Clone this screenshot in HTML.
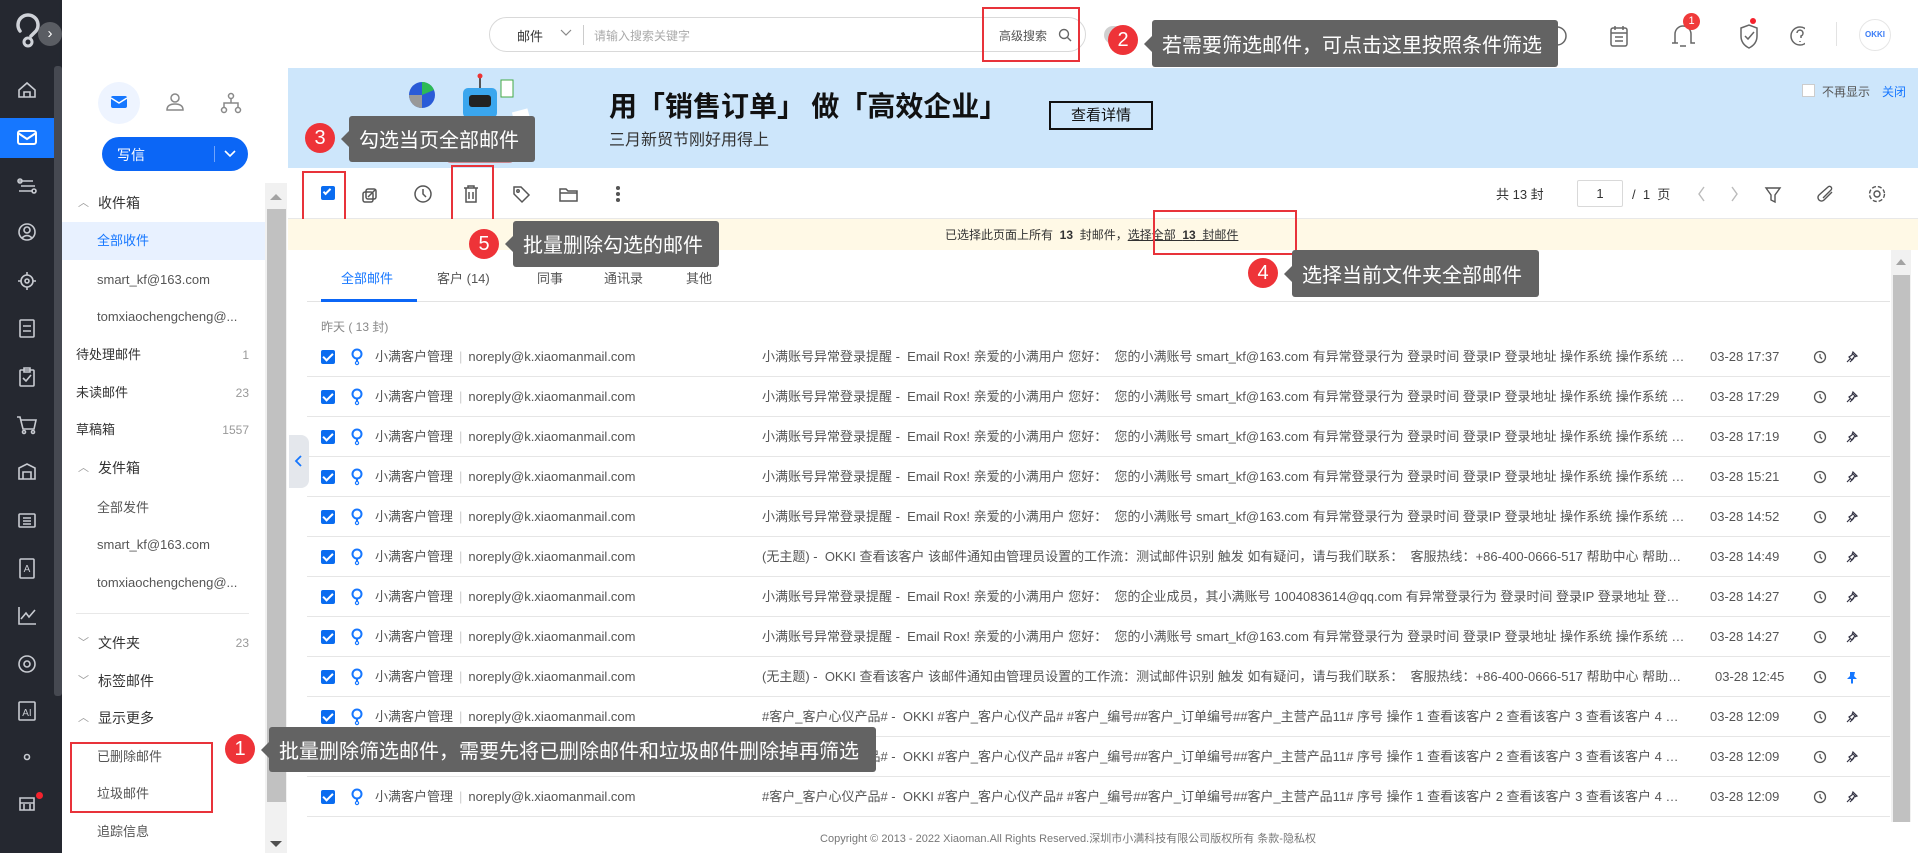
<!DOCTYPE html>
<html><head><meta charset="utf-8">
<style>
*{box-sizing:border-box;margin:0;padding:0}
body{width:1918px;height:853px;overflow:hidden;position:relative;background:#fff;font-family:"Liberation Sans","Noto Sans CJK SC",sans-serif;color:#333;font-size:13px}
.a{position:absolute}
.nav{left:0;top:0;width:62px;height:853px;background:#252830}
.navstrip{left:54px;top:66px;width:8px;height:630px;background:#464951;border-radius:3px}
.hdr{left:62px;top:0;width:1856px;height:68px;background:#fff;box-shadow:0 1px 3px rgba(0,0,0,.08)}
.topline{left:0;top:0;width:1918px;height:2px;background:#555}
.fp{left:62px;top:68px;width:226px;height:785px;background:#fff}
.fi{position:absolute;left:98px;font-size:14px;color:#333;line-height:20px}
.fs{position:absolute;left:97px;font-size:13px;color:#555;line-height:20px}
.ft{position:absolute;left:76px;font-size:13px;color:#333;line-height:20px}
.cnt{position:absolute;right:1669px;font-size:12px;color:#999;line-height:20px}
.chev{position:absolute;left:78px;font-size:11px;color:#999;line-height:20px}
.tip{position:absolute;background:#636363;color:#fff;font-size:20px;line-height:20px;border-radius:3px;padding:0 10px;display:flex;align-items:center;white-space:nowrap;font-family:"Noto Sans CJK SC",sans-serif}
.tip:before{content:"";position:absolute;left:-8px;top:50%;margin-top:-8px;border:8px solid transparent;border-left:0;border-right-color:#636363}
.bd{position:absolute;width:30px;height:30px;border-radius:50%;background:#ee3338;color:#fff;font-size:20px;text-align:center;line-height:30px}
.rb{position:absolute;border:2px solid #e8333a}
.row{position:absolute;left:307px;width:1583px;height:40px;border-bottom:1px solid #e6e6e6}
.cb{position:absolute;left:14px;top:13px;width:14px;height:14px;background:#0a6cf0;border-radius:2px}
.cb:after{content:"";position:absolute;left:4px;top:1px;width:4px;height:8px;border:solid #fff;border-width:0 2px 2px 0;transform:rotate(45deg)}
.bulb{position:absolute;left:44px;top:11px}
.snd{position:absolute;left:68px;top:11px;font-size:13px;color:#555;line-height:18px;white-space:nowrap}
.snd i{font-style:normal;color:#ccc;margin:0 6px}
.sub{position:absolute;left:455px;top:11px;width:928px;font-size:13px;color:#555;line-height:18px;white-space:nowrap;overflow:hidden;text-overflow:ellipsis}
.dt{position:absolute;left:1403px;top:11px;font-size:13px;color:#555;line-height:18px}
.clk{position:absolute;left:1506px;top:13px}
.pin{position:absolute;left:1538px;top:13px}
</style></head><body>
<div class="a topline"></div>
<div class="a nav"></div>
<div class="a navstrip"></div>
<svg class="a" style="left:15px;top:9px" width="26" height="40" viewBox="0 0 26 40"><path d="M5 22 A10 10 0 1 1 21 22 L16 27" fill="none" stroke="#cfd2d8" stroke-width="3.5" stroke-linecap="round"/><circle cx="13" cy="33" r="4" fill="none" stroke="#cfd2d8" stroke-width="3"/></svg>
<div class="a" style="left:38px;top:22px;width:24px;height:24px;border-radius:50%;background:#5a5d63;color:#fff;font-size:15px;text-align:center;line-height:23px">›</div>
<div class="a" style="left:0;top:118px;width:54px;height:40px;background:#1677ff"></div>
<svg class="a" style="left:0;top:0" width="54" height="853" fill="none" stroke="#c8cbd1" stroke-width="1.6">
<path d="M19 90 L27 83 L35 90 V97 H19 Z M24 97 V92 H30 V97"/>
<rect x="18" y="131" width="18" height="13" rx="2" stroke="#fff" stroke-width="2"/><path d="M18 133 L27 139 L36 133" stroke="#fff" stroke-width="2"/>
<path d="M19 181 H33 M21 186 H35 M19 191 H33"/><circle cx="20" cy="181" r="2"/><circle cx="34" cy="191" r="2"/>
<circle cx="27" cy="232" r="8"/><circle cx="27" cy="230" r="3"/><path d="M22 238 Q27 233 32 238"/>
<circle cx="27" cy="281" r="6"/><circle cx="27" cy="281" r="2"/><path d="M27 272 V275 M27 287 V290 M18 281 H21 M33 281 H36"/>
<rect x="20" y="320" width="14" height="17" rx="1"/><path d="M23 326 H31 M23 331 H31"/>
<rect x="20" y="370" width="14" height="16" rx="1"/><path d="M24 368 H30 V372 H24 Z M23 378 L26 381 L31 375"/>
<path d="M17 417 H20 L23 429 H34 L36 420 H21"/><circle cx="24" cy="432" r="1.5"/><circle cx="33" cy="432" r="1.5"/>
<path d="M19 479 V468 L27 464 L35 468 V479 Z M23 479 V472 H31 V479"/>
<rect x="19" y="514" width="16" height="13" rx="1"/><path d="M23 518 H31 M23 521 H31 M23 524 H31"/>
<rect x="20" y="559" width="14" height="19" rx="1"/><text x="27" y="572" font-size="10" fill="#c8cbd1" stroke="none" text-anchor="middle" font-family="Liberation Sans">A</text>
<path d="M19 607 V624 H36 M21 619 L26 613 L29 617 L35 610"/>
<circle cx="27" cy="664" r="8"/><circle cx="27" cy="664" r="3"/>
<rect x="19" y="702" width="16" height="18" rx="1"/><text x="27" y="716" font-size="10" fill="#c8cbd1" stroke="none" text-anchor="middle" font-family="Liberation Sans">AI</text>
<circle cx="27" cy="757" r="2.5"/>
<path d="M20 798 H34 V810 H20 Z M20 803 H34 M24 810 V804 M30 810 V804"/>
</svg>
<div class="a" style="left:36px;top:792px;width:7px;height:7px;border-radius:50%;background:#f5222d"></div>

<div class="a hdr"></div>
<div class="a" style="left:489px;top:17px;width:597px;height:35px;border:1px solid #d9d9d9;border-radius:18px;background:#fff"></div>
<div class="a" style="left:517px;top:26px;font-size:13px;color:#333">邮件</div>
<svg class="a" style="left:560px;top:29px" width="12" height="8"><path d="M1 1 L6 6 L11 1" fill="none" stroke="#888" stroke-width="1.2"/></svg>
<div class="a" style="left:583px;top:25px;width:1px;height:20px;background:#ccc"></div>
<div class="a" style="left:594px;top:27px;font-size:12px;color:#aaa">请输入搜索关键字</div>
<div class="a" style="left:999px;top:27px;font-size:12px;color:#555">高级搜索</div>
<svg class="a" style="left:1058px;top:28px" width="14" height="14" fill="none" stroke="#666" stroke-width="1.4"><circle cx="6" cy="6" r="4.5"/><path d="M9.5 9.5 L13 13"/></svg>
<div class="rb" style="left:982px;top:7px;width:98px;height:55px"></div>
<div class="a" style="left:1104px;top:26px;width:26px;height:18px;border-radius:9px;background:#d0d0d0"></div>
<svg class="a" style="left:1545px;top:22px" width="260" height="30" fill="none" stroke="#666" stroke-width="1.5">
<circle cx="12" cy="14" r="9"/>
<rect x="66" y="6" width="16" height="18" rx="2"/><path d="M66 11 H82 M70 4 V8 M78 4 V8 M70 15 H78 M70 19 H78"/>
<path d="M130 21 V12 A8 8 0 0 1 146 12 V21 H150 M127 21 H133 M135 24 H141"/>
<path d="M196 6 L204 3 L212 6 V14 Q212 22 204 26 Q196 22 196 14 Z M200 14 L203 17 L209 10"/>
<circle cx="255" cy="14" r="9"/><path d="M252 11 A3 3 0 1 1 256 14 V16 M255 19 V20"/>
</svg>
<div class="a" style="left:1750px;top:18px;width:6px;height:6px;border-radius:50%;background:#f5222d"></div>
<div class="a" style="left:1683px;top:13px;width:17px;height:17px;border-radius:50%;background:#f03a3a;color:#fff;font-size:11px;text-align:center;line-height:17px">1</div>
<div class="a" style="left:1836px;top:22px;width:1px;height:24px;background:#e3e3e3"></div>
<div class="a" style="left:1859px;top:19px;width:32px;height:32px;border-radius:50%;border:1px solid #e6e6e6;color:#3a7cf6;font-size:8px;font-weight:bold;text-align:center;line-height:30px">OKKI</div>
<div class="bd" style="left:1108px;top:25px">2</div>
<div class="tip" style="left:1152px;top:20px;width:406px;height:47px">若需要筛选邮件，可点击这里按照条件筛选</div>

<div class="a fp"></div>
<div class="a" style="left:98px;top:82px;width:42px;height:42px;border-radius:50%;background:#eef4ff"></div>
<svg class="a" style="left:0;top:0" width="260" height="130"><rect x="111" y="96" width="16" height="12" rx="2" fill="#1677ff"/><path d="M111 98 L119 103 L127 98" stroke="#fff" stroke-width="1.5" fill="none"/>
<g fill="none" stroke="#888" stroke-width="1.5"><circle cx="175" cy="98" r="4"/><path d="M167 110 Q167 104 175 104 Q183 104 183 110 Z"/>
<circle cx="231" cy="96" r="2.5"/><circle cx="224" cy="110" r="2.5"/><circle cx="238" cy="110" r="2.5"/><path d="M231 99 V103 M224 107 V103 H238 V107"/></g></svg>
<div class="a" style="left:102px;top:137px;width:146px;height:34px;border-radius:17px;background:#0b66f6"></div>
<div class="a" style="left:117px;top:145px;font-size:14px;color:#fff">写信</div>
<div class="a" style="left:214px;top:146px;width:1px;height:16px;background:#6fa3fb"></div>
<svg class="a" style="left:224px;top:150px" width="12" height="8"><path d="M1 1 L6 6 L11 1" fill="none" stroke="#fff" stroke-width="1.6"/></svg>
<div class="a" style="left:62px;top:222px;width:203px;height:38px;background:#e8f1ff"></div>
<div class="chev" style="top:193px">︿</div><div class="fi" style="top:193px">收件箱</div>
<div class="fs" style="top:231px;color:#1677ff">全部收件</div>
<div class="fs" style="top:270px">smart_kf@163.com</div>
<div class="fs" style="top:307px">tomxiaochengcheng@...</div>
<div class="ft" style="top:345px">待处理邮件</div><div class="cnt" style="top:345px">1</div>
<div class="ft" style="top:383px">未读邮件</div><div class="cnt" style="top:383px">23</div>
<div class="ft" style="top:420px">草稿箱</div><div class="cnt" style="top:420px">1557</div>
<div class="chev" style="top:458px">︿</div><div class="fi" style="top:458px">发件箱</div>
<div class="fs" style="top:498px">全部发件</div>
<div class="fs" style="top:535px">smart_kf@163.com</div>
<div class="fs" style="top:573px">tomxiaochengcheng@...</div>
<div class="a" style="left:76px;top:613px;width:173px;height:1px;background:#e8e8e8"></div>
<div class="chev" style="top:633px">﹀</div><div class="fi" style="top:633px">文件夹</div><div class="cnt" style="top:633px">23</div>
<div class="chev" style="top:671px">﹀</div><div class="fi" style="top:671px">标签邮件</div>
<div class="chev" style="top:708px">︿</div><div class="fi" style="top:708px">显示更多</div>
<div class="fs" style="top:747px">已删除邮件</div>
<div class="fs" style="top:784px">垃圾邮件</div>
<div class="fs" style="top:822px">追踪信息</div>
<div class="rb" style="left:70px;top:742px;width:143px;height:71px"></div>
<div class="a" style="left:265px;top:183px;width:22px;height:670px;background:#f1f1f1"></div>
<div class="a" style="left:267px;top:209px;width:19px;height:593px;background:#c1c1c1"></div>
<svg class="a" style="left:269px;top:193px" width="14" height="8"><path d="M1 7 L7 1 L13 7 Z" fill="#a3a3a3"/></svg>
<svg class="a" style="left:269px;top:840px" width="14" height="8"><path d="M1 1 L7 7 L13 1 Z" fill="#505050"/></svg>

<div class="a" style="left:288px;top:68px;width:1630px;height:100px;background:#cde6fb"></div>
<svg class="a" style="left:385px;top:68px" width="160" height="100">
<circle cx="37" cy="27" r="13" fill="#2a5bd7"/><path d="M37 27 L37 14 A13 13 0 0 1 49 22 Z" fill="#2dba55"/><path d="M37 27 L24 27 A13 13 0 0 0 37 40 Z" fill="#999"/>
<rect x="78" y="20" width="34" height="30" rx="5" fill="#3aa6ee"/><rect x="84" y="27" width="22" height="12" rx="3" fill="#222"/><path d="M95 20 V10" stroke="#555" stroke-width="2"/><circle cx="95" cy="8" r="2.5" fill="#e33"/>
<rect x="116" y="12" width="12" height="17" fill="#fff" stroke="#4a4" stroke-width="1"/>
<rect x="60" y="55" width="70" height="40" rx="6" fill="#c54b4b" opacity=".6"/>
<rect x="130" y="42" width="16" height="26" fill="#fff" transform="rotate(-15 138 55)"/>
</svg>
<div class="a" style="left:609px;top:86px;font-size:28px;font-weight:bold;color:#111;font-family:'Noto Sans CJK SC',sans-serif;line-height:38px">用「销售订单」 做「高效企业」</div>
<div class="a" style="left:609px;top:131px;font-size:16px;color:#333;line-height:20px">三月新贸节刚好用得上</div>
<div class="a" style="left:1049px;top:101px;width:104px;height:29px;border:2px solid #111;font-size:15px;text-align:center;line-height:25px;color:#111">查看详情</div>
<div class="a" style="left:1802px;top:84px;width:13px;height:13px;border:1px solid #ccc;background:#fff"></div>
<div class="a" style="left:1822px;top:83px;font-size:12px;color:#555">不再显示</div>
<div class="a" style="left:1882px;top:83px;font-size:12px;color:#1677ff">关闭</div>
<div class="bd" style="left:305px;top:123px">3</div>
<div class="tip" style="left:349px;top:116px;width:186px;height:46px">勾选当页全部邮件</div>

<div class="a" style="left:288px;top:218px;width:1630px;height:1px;background:#e8e8e8"></div>
<div class="a" style="left:321px;top:186px;width:14px;height:14px;background:#0a6cf0;border-radius:2px"></div>
<div class="a" style="left:325px;top:187px;width:4px;height:8px;border:solid #fff;border-width:0 2px 2px 0;transform:rotate(45deg)"></div>
<svg class="a" style="left:360px;top:183px" width="280" height="22" fill="none" stroke="#555" stroke-width="1.5">
<rect x="6" y="6" width="10" height="10" rx="2"/><rect x="3" y="9" width="10" height="10" rx="2"/><path d="M8 14 L15 7"/>
<circle cx="63" cy="11" r="8"/><path d="M63 6 V11 L66 14"/>
<path d="M104 5 H118 M108 5 V3 H114 V5 M106 5 V19 H116 V5 M109 9 V16 M113 9 V16"/>
<path d="M154 4 H161 L169 12 L162 19 L154 11 Z"/><circle cx="158" cy="8" r="1.2"/>
<path d="M200 6 H206 L208 8 H217 V18 H200 Z M200 10 H217"/>
<circle cx="258" cy="5" r="1.3" fill="#555"/><circle cx="258" cy="11" r="1.3" fill="#555"/><circle cx="258" cy="17" r="1.3" fill="#555"/>
</svg>
<div class="rb" style="left:302px;top:171px;width:44px;height:57px"></div>
<div class="rb" style="left:451px;top:165px;width:43px;height:56px"></div>
<div class="a" style="left:1496px;top:184px;font-size:13px;color:#333">共 13 封</div>
<div class="a" style="left:1577px;top:180px;width:46px;height:27px;border:1px solid #d9d9d9;border-radius:2px;font-size:13px;text-align:center;line-height:25px">1</div>
<div class="a" style="left:1632px;top:184px;font-size:13px;color:#333">/ &nbsp;1 &nbsp;页</div>
<svg class="a" style="left:1694px;top:183px" width="200" height="22" fill="none" stroke="#bbb" stroke-width="1.4">
<path d="M10 4 L5 11 L10 18"/><path d="M38 4 L43 11 L38 18"/>
<path d="M72 5 H86 L81 12 V19 L77 17 V12 Z" stroke="#555"/>
<path d="M138 9 L130 17 A3 3 0 0 1 125 12 L134 4 A2 2 0 0 1 137 7 L129 15" stroke="#555"/>
<circle cx="183" cy="11" r="3" stroke="#555"/><circle cx="183" cy="11" r="7.5" stroke="#555" stroke-dasharray="4 2"/>
</svg>
<div class="a" style="left:288px;top:219px;width:1630px;height:31px;background:#fff9e6"></div>
<div class="a" style="left:945px;top:226px;font-size:12px;color:#333;line-height:18px">已选择此页面上所有 &nbsp;<b>13</b>&nbsp; 封邮件，<span style="text-decoration:underline">选择全部 &nbsp;<b>13</b>&nbsp; 封邮件</span></div>
<div class="rb" style="left:1153px;top:210px;width:144px;height:45px"></div>
<div class="bd" style="left:469px;top:229px">5</div>
<div class="tip" style="left:513px;top:221px;width:206px;height:46px">批量删除勾选的邮件</div>
<div class="bd" style="left:1248px;top:258px">4</div>
<div class="tip" style="left:1292px;top:250px;width:247px;height:47px">选择当前文件夹全部邮件</div>

<div class="a" style="left:307px;top:301px;width:1583px;height:1px;background:#e3e3e3"></div>
<div class="a" style="left:321px;top:299px;width:96px;height:3px;background:#0b66f6"></div>
<div class="a" style="left:341px;top:268px;font-size:13px;color:#1677ff">全部邮件</div>
<div class="a" style="left:437px;top:268px;font-size:13px;color:#555">客户 (14)</div>
<div class="a" style="left:537px;top:268px;font-size:13px;color:#555">同事</div>
<div class="a" style="left:604px;top:268px;font-size:13px;color:#555">通讯录</div>
<div class="a" style="left:686px;top:268px;font-size:13px;color:#555">其他</div>
<div class="a" style="left:321px;top:318px;font-size:12px;color:#888">昨天 ( 13 封)</div>
<div class="a" style="left:289px;top:435px;width:20px;height:53px;background:#e4e7ec;border-radius:0 8px 8px 0"></div>
<svg class="a" style="left:294px;top:455px" width="10" height="12"><path d="M7 1 L2 6 L7 11" fill="none" stroke="#1677ff" stroke-width="1.8"/></svg>

<svg width="0" height="0" style="position:absolute"><defs>
<g id="bl"><circle cx="6" cy="6" r="4.5" fill="none" stroke="#1677ff" stroke-width="2"/><path d="M6 10.5 V13" stroke="#1677ff" stroke-width="2"/><circle cx="6" cy="15" r="1.6" fill="none" stroke="#1677ff" stroke-width="1.2"/></g>
<g id="ck"><circle cx="7" cy="7" r="5.5" fill="none" stroke="#555" stroke-width="1.3"/><path d="M7 4 V7 L9 9" fill="none" stroke="#555" stroke-width="1.3"/></g>
<g id="pn"><path d="M5 12 L9 8 M7 3 L11 7 M8 2 L12 6 L9 7 L7 10 L4 7 L7 5 Z M2 12 L5 9" fill="none" stroke="#334" stroke-width="1.2"/></g>
</defs></svg>

<div class="row" style="top:337px"><div class="cb"></div><svg class="bulb" width="12" height="18"><use href="#bl"/></svg><div class="snd">小满客户管理<i>|</i>noreply@k.xiaomanmail.com</div><div class="sub">小满账号异常登录提醒 - &nbsp;Email Rox! 亲爱的小满用户 您好： &nbsp;您的小满账号 smart_kf@163.com 有异常登录行为 登录时间 登录IP 登录地址 操作系统 操作系统 操作系统</div><div class="dt">03-28 17:37</div><svg class="clk" width="14" height="14"><use href="#ck"/></svg><svg class="pin" width="14" height="14"><use href="#pn"/></svg></div>
<div class="row" style="top:377px"><div class="cb"></div><svg class="bulb" width="12" height="18"><use href="#bl"/></svg><div class="snd">小满客户管理<i>|</i>noreply@k.xiaomanmail.com</div><div class="sub">小满账号异常登录提醒 - &nbsp;Email Rox! 亲爱的小满用户 您好： &nbsp;您的小满账号 smart_kf@163.com 有异常登录行为 登录时间 登录IP 登录地址 操作系统 操作系统 操作系统</div><div class="dt">03-28 17:29</div><svg class="clk" width="14" height="14"><use href="#ck"/></svg><svg class="pin" width="14" height="14"><use href="#pn"/></svg></div>
<div class="row" style="top:417px"><div class="cb"></div><svg class="bulb" width="12" height="18"><use href="#bl"/></svg><div class="snd">小满客户管理<i>|</i>noreply@k.xiaomanmail.com</div><div class="sub">小满账号异常登录提醒 - &nbsp;Email Rox! 亲爱的小满用户 您好： &nbsp;您的小满账号 smart_kf@163.com 有异常登录行为 登录时间 登录IP 登录地址 操作系统 操作系统 操作系统</div><div class="dt">03-28 17:19</div><svg class="clk" width="14" height="14"><use href="#ck"/></svg><svg class="pin" width="14" height="14"><use href="#pn"/></svg></div>
<div class="row" style="top:457px"><div class="cb"></div><svg class="bulb" width="12" height="18"><use href="#bl"/></svg><div class="snd">小满客户管理<i>|</i>noreply@k.xiaomanmail.com</div><div class="sub">小满账号异常登录提醒 - &nbsp;Email Rox! 亲爱的小满用户 您好： &nbsp;您的小满账号 smart_kf@163.com 有异常登录行为 登录时间 登录IP 登录地址 操作系统 操作系统 操作系统</div><div class="dt">03-28 15:21</div><svg class="clk" width="14" height="14"><use href="#ck"/></svg><svg class="pin" width="14" height="14"><use href="#pn"/></svg></div>
<div class="row" style="top:497px"><div class="cb"></div><svg class="bulb" width="12" height="18"><use href="#bl"/></svg><div class="snd">小满客户管理<i>|</i>noreply@k.xiaomanmail.com</div><div class="sub">小满账号异常登录提醒 - &nbsp;Email Rox! 亲爱的小满用户 您好： &nbsp;您的小满账号 smart_kf@163.com 有异常登录行为 登录时间 登录IP 登录地址 操作系统 操作系统 操作系统</div><div class="dt">03-28 14:52</div><svg class="clk" width="14" height="14"><use href="#ck"/></svg><svg class="pin" width="14" height="14"><use href="#pn"/></svg></div>
<div class="row" style="top:537px"><div class="cb"></div><svg class="bulb" width="12" height="18"><use href="#bl"/></svg><div class="snd">小满客户管理<i>|</i>noreply@k.xiaomanmail.com</div><div class="sub">(无主题) - &nbsp;OKKI 查看该客户 该邮件通知由管理员设置的工作流：测试邮件识别 触发 如有疑问，请与我们联系： &nbsp;客服热线：+86-400-0666-517 帮助中心 帮助中心 帮助中心</div><div class="dt">03-28 14:49</div><svg class="clk" width="14" height="14"><use href="#ck"/></svg><svg class="pin" width="14" height="14"><use href="#pn"/></svg></div>
<div class="row" style="top:577px"><div class="cb"></div><svg class="bulb" width="12" height="18"><use href="#bl"/></svg><div class="snd">小满客户管理<i>|</i>noreply@k.xiaomanmail.com</div><div class="sub">小满账号异常登录提醒 - &nbsp;Email Rox! 亲爱的小满用户 您好： &nbsp;您的企业成员，其小满账号 1004083614@qq.com 有异常登录行为 登录时间 登录IP 登录地址 登录地址 登录地址</div><div class="dt">03-28 14:27</div><svg class="clk" width="14" height="14"><use href="#ck"/></svg><svg class="pin" width="14" height="14"><use href="#pn"/></svg></div>
<div class="row" style="top:617px"><div class="cb"></div><svg class="bulb" width="12" height="18"><use href="#bl"/></svg><div class="snd">小满客户管理<i>|</i>noreply@k.xiaomanmail.com</div><div class="sub">小满账号异常登录提醒 - &nbsp;Email Rox! 亲爱的小满用户 您好： &nbsp;您的小满账号 smart_kf@163.com 有异常登录行为 登录时间 登录IP 登录地址 操作系统 操作系统 操作系统</div><div class="dt">03-28 14:27</div><svg class="clk" width="14" height="14"><use href="#ck"/></svg><svg class="pin" width="14" height="14"><use href="#pn"/></svg></div>
<div class="row" style="top:657px"><div class="cb"></div><svg class="bulb" width="12" height="18"><use href="#bl"/></svg><div class="snd">小满客户管理<i>|</i>noreply@k.xiaomanmail.com</div><div class="sub">(无主题) - &nbsp;OKKI 查看该客户 该邮件通知由管理员设置的工作流：测试邮件识别 触发 如有疑问，请与我们联系： &nbsp;客服热线：+86-400-0666-517 帮助中心 帮助中心 帮助中心</div><div class="dt" style="left:1408px">03-28 12:45</div><svg class="clk" width="14" height="14"><use href="#ck"/></svg><svg class="pin" width="14" height="14"><path d="M5 2 H10 L9 6 L12 9 H8 V13 L7 14 L6 13 V9 H2 L5 6 Z" fill="#1677ff"/></svg></div>
<div class="row" style="top:697px"><div class="cb"></div><svg class="bulb" width="12" height="18"><use href="#bl"/></svg><div class="snd">小满客户管理<i>|</i>noreply@k.xiaomanmail.com</div><div class="sub">#客户_客户心仪产品# - &nbsp;OKKI #客户_客户心仪产品# #客户_编号##客户_订单编号##客户_主营产品11# 序号 操作 1 查看该客户 2 查看该客户 3 查看该客户 4 查看该客户</div><div class="dt">03-28 12:09</div><svg class="clk" width="14" height="14"><use href="#ck"/></svg><svg class="pin" width="14" height="14"><use href="#pn"/></svg></div>
<div class="row" style="top:737px"><div class="cb"></div><svg class="bulb" width="12" height="18"><use href="#bl"/></svg><div class="snd">小满客户管理<i>|</i>noreply@k.xiaomanmail.com</div><div class="sub">#客户_客户心仪产品# - &nbsp;OKKI #客户_客户心仪产品# #客户_编号##客户_订单编号##客户_主营产品11# 序号 操作 1 查看该客户 2 查看该客户 3 查看该客户 4 查看该客户</div><div class="dt">03-28 12:09</div><svg class="clk" width="14" height="14"><use href="#ck"/></svg><svg class="pin" width="14" height="14"><use href="#pn"/></svg></div>
<div class="row" style="top:777px"><div class="cb"></div><svg class="bulb" width="12" height="18"><use href="#bl"/></svg><div class="snd">小满客户管理<i>|</i>noreply@k.xiaomanmail.com</div><div class="sub">#客户_客户心仪产品# - &nbsp;OKKI #客户_客户心仪产品# #客户_编号##客户_订单编号##客户_主营产品11# 序号 操作 1 查看该客户 2 查看该客户 3 查看该客户 4 查看该客户</div><div class="dt">03-28 12:09</div><svg class="clk" width="14" height="14"><use href="#ck"/></svg><svg class="pin" width="14" height="14"><use href="#pn"/></svg></div>

<div class="bd" style="left:225px;top:734px">1</div>
<div class="tip" style="left:269px;top:727px;width:607px;height:45px">批量删除筛选邮件，需要先将已删除邮件和垃圾邮件删除掉再筛选</div>

<div class="a" style="left:1891px;top:250px;width:20px;height:572px;background:#f1f1f1"></div>
<div class="a" style="left:1893px;top:275px;width:17px;height:547px;background:#c1c1c1"></div>
<svg class="a" style="left:1895px;top:258px" width="12" height="8"><path d="M1 7 L6 1 L11 7 Z" fill="#a3a3a3"/></svg>
<div class="a" style="left:288px;top:830px;width:1560px;text-align:center;font-size:11px;color:#777">Copyright © 2013 - 2022 Xiaoman.All Rights Reserved.深圳市小满科技有限公司版权所有 条款-隐私权</div>
</body></html>
